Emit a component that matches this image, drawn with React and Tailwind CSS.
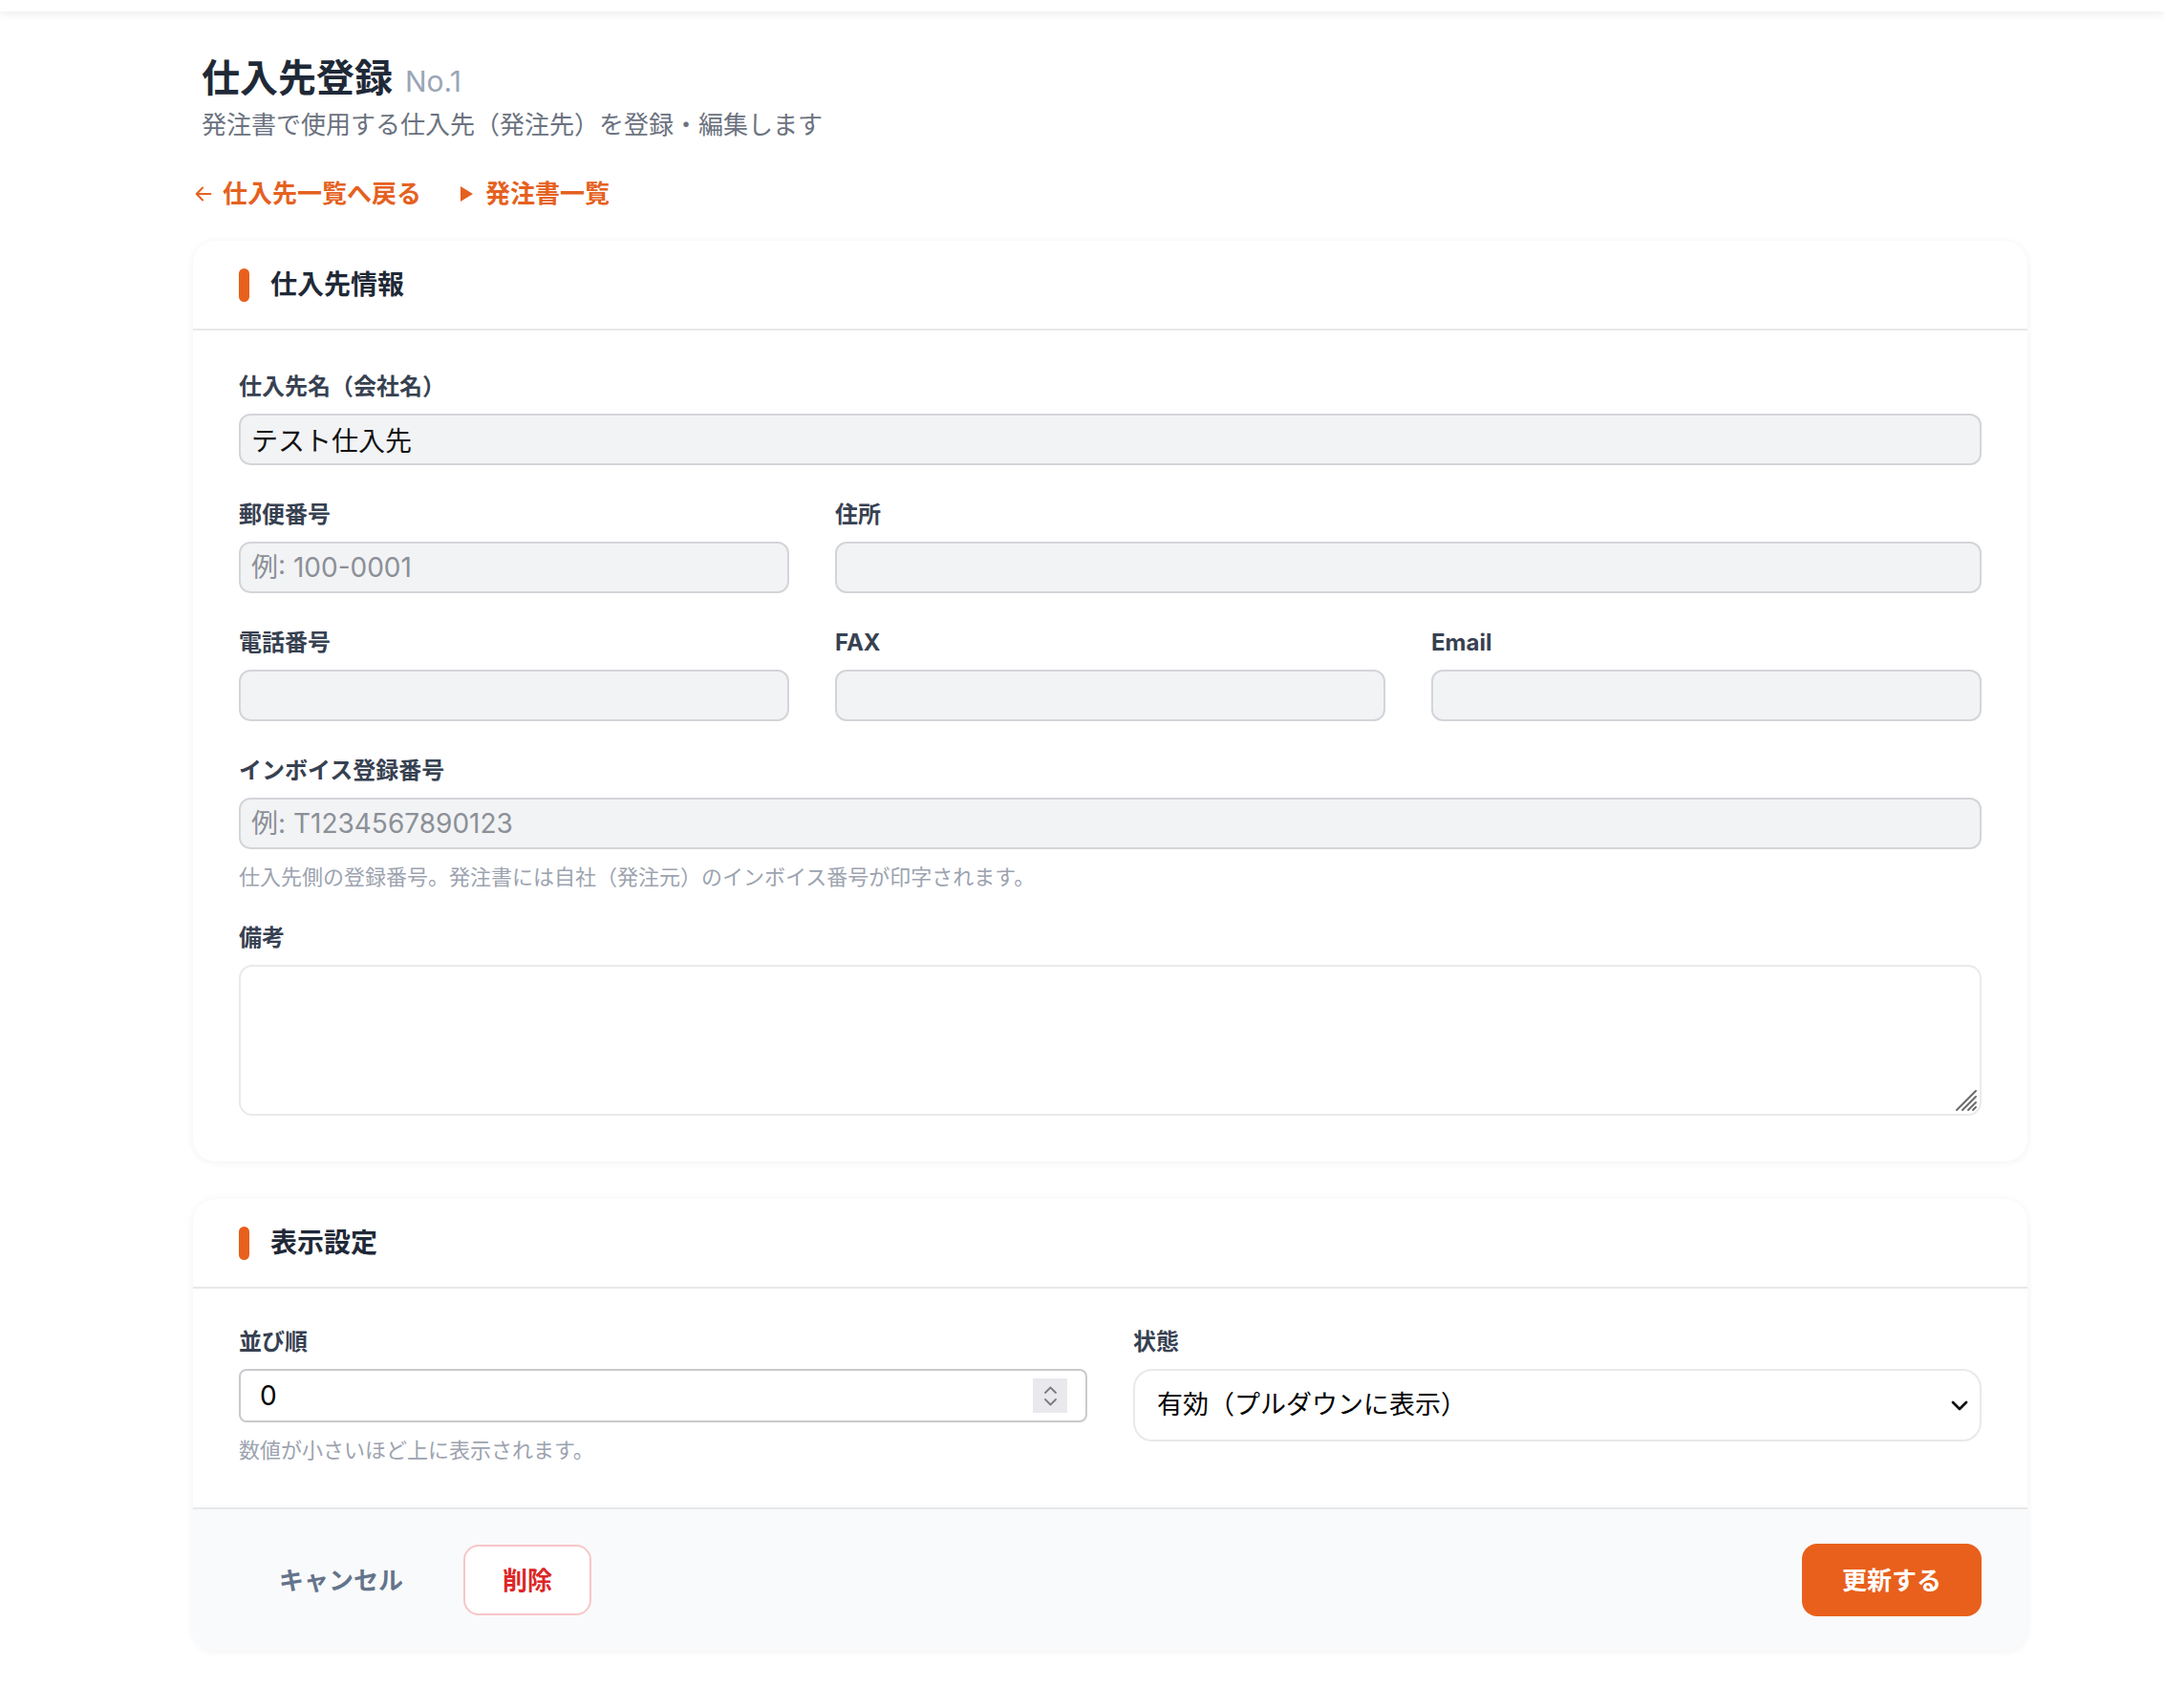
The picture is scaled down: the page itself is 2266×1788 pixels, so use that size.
import React from "react";

const ORANGE = "bg-[#e8601c]";

function SectionHeader({ title }) {
    return (
        <div className="px-[48px] py-[28px] border-b-2 border-[#e7e8ea]">
            <div className="flex items-center gap-[22px]">
                <span className={`w-[11px] h-[35px] rounded-full ${ORANGE}`} />
                <h2 className="text-[28px] leading-[36px] font-bold text-[#1f2937]">{title}</h2>
            </div>
        </div>
    );
}

function Label({ children }) {
    return (
        <label className="block mb-[12px] text-[24px] leading-[32px] font-bold text-[#374151]">
            {children}
        </label>
    );
}

function TextField({ label, value, placeholder, className = "" }) {
    return (
        <div className={className}>
            <Label>{label}</Label>
            <input
                type="text"
                defaultValue={value}
                placeholder={placeholder}
                className="block w-full h-[54px] rounded-[12px] border-2 border-[#d3d5d9] bg-[#f2f3f5] px-[11px] text-[28px] text-[#111111] placeholder:text-[#8b9097] outline-none"
            />
        </div>
    );
}

function Help({ children, className = "" }) {
    return <p className={`text-[22px] leading-[30px] text-[#9ca3af] ${className}`}>{children}</p>;
}

export default function App() {
    return (
        <div className="min-h-screen bg-white font-['Inter','Noto_Sans_CJK_JP',sans-serif] text-[#1f2937]">
            {/* top bar edge */}
            <div className="h-[12px] bg-white shadow-[0_3px_10px_rgba(0,0,0,0.07)]" />

            <div className="ml-[202px] w-[1920px] pt-[42px] pb-[56px]">
                {/* Page heading */}
                <div className="pl-[9px]">
                    <h1 className="flex items-baseline gap-[13px] text-[40px] leading-[56px] font-bold text-[#1f2937]">
                        仕入先登録
                        <span className="text-[30px] font-normal text-[#9aa5b5]">No.1</span>
                    </h1>
                    <p className="mt-0 text-[26px] leading-[36px] text-[#6b7280]">
                        発注書で使用する仕入先（発注先）を登録・編集します
                    </p>
                </div>

                {/* Links */}
                <div className="mt-[36px] flex items-center gap-[40px] text-[26px] leading-[36px] font-bold text-[#e5611f]">
                    <a className="flex items-center gap-[9px]">
                        <svg className="w-[22px] h-[22px]" viewBox="0 0 24 24" fill="none" stroke="currentColor" strokeWidth={2.2} strokeLinecap="round" strokeLinejoin="round">
                            <path d="M20 12H4M11 5l-7 7 7 7" />
                        </svg>
                        仕入先一覧へ戻る
                    </a>
                    <a className="flex items-center gap-[12px]">
                        <svg className="w-[15px] h-[18px]" viewBox="0 0 15 18" fill="currentColor">
                            <path d="M1 1l13 8-13 8z" />
                        </svg>
                        発注書一覧
                    </a>
                </div>

                {/* Card 1 */}
                <div className="mt-[31px] rounded-[24px] bg-white shadow-[0_1px_8px_rgba(0,0,0,0.06)]">
                    <SectionHeader title="仕入先情報" />
                    <div className="px-[48px] pt-[43px] pb-[48px] flex flex-col gap-[36px]">
                        <TextField label="仕入先名（会社名）" value="テスト仕入先" />
                        <div className="grid grid-cols-3 gap-x-[48px]">
                            <TextField label="郵便番号" placeholder="例: 100-0001" />
                            <TextField label="住所" className="col-span-2" />
                        </div>
                        <div className="grid grid-cols-3 gap-x-[48px]">
                            <TextField label="電話番号" />
                            <TextField label="FAX" />
                            <TextField label="Email" />
                        </div>
                        <div>
                            <TextField label="インボイス登録番号" placeholder="例: T1234567890123" />
                            <Help className="mt-[14px]">
                                仕入先側の登録番号。発注書には自社（発注元）のインボイス番号が印字されます。
                            </Help>
                        </div>
                        <div className="-mt-[3px]">
                            <Label>備考</Label>
                            <div className="relative">
                                <textarea className="block w-full h-[158px] resize-none rounded-[14px] border-2 border-[#e9eaec] bg-white px-[12px] py-[10px] text-[28px] outline-none" />
                                <svg className="absolute right-[4px] bottom-[4px] w-[24px] h-[24px]" viewBox="0 0 24 24" stroke="#6b6b6b" strokeWidth={2} strokeLinecap="round">
                                    <path d="M2 22L22 2M8 22L22 8M14 22l8-8M19 22l3-3" />
                                </svg>
                            </div>
                        </div>
                    </div>
                </div>

                {/* Card 2 */}
                <div className="mt-[39px] rounded-[24px] bg-white shadow-[0_1px_8px_rgba(0,0,0,0.06)] overflow-hidden">
                    <SectionHeader title="表示設定" />
                    <div className="px-[48px] pt-[40px] pb-[45px] grid grid-cols-2 gap-x-[48px]">
                        <div>
                            <Label>並び順</Label>
                            <div className="h-[56px] rounded-[8px] border-2 border-[#c9cacd] bg-white flex items-center justify-between pl-[20px] pr-[19px]">
                                <span className="text-[28px] text-black">0</span>
                                <span className="w-[36px] h-[36px] bg-[#e9e9ed] flex flex-col items-center justify-center gap-[5px]">
                                    <svg className="w-[13px] h-[8px]" viewBox="0 0 13 8" fill="none" stroke="#7c7c80" strokeWidth={1.8} strokeLinecap="round" strokeLinejoin="round">
                                        <path d="M1 7l5.5-5.5L12 7" />
                                    </svg>
                                    <svg className="w-[13px] h-[8px]" viewBox="0 0 13 8" fill="none" stroke="#7c7c80" strokeWidth={1.8} strokeLinecap="round" strokeLinejoin="round">
                                        <path d="M1 1l5.5 5.5L12 1" />
                                    </svg>
                                </span>
                            </div>
                            <Help className="mt-[14px]">数値が小さいほど上に表示されます。</Help>
                        </div>
                        <div>
                            <Label>状態</Label>
                            <div className="h-[76px] rounded-[20px] border-2 border-[#e8e9eb] bg-white flex items-center justify-between pl-[23px] pr-[12px]">
                                <span className="text-[27px] text-black">有効（プルダウンに表示）</span>
                                <svg className="w-[18px] h-[11px]" viewBox="0 0 18 11" fill="none" stroke="#111111" strokeWidth={2.8} strokeLinecap="round" strokeLinejoin="round">
                                    <path d="M2 2l7 7 7-7" />
                                </svg>
                            </div>
                        </div>
                    </div>

                    {/* Footer */}
                    <div className="border-t-2 border-[#e7e8ea] bg-[#f9fafb] px-[48px] py-[36px] flex items-center justify-between">
                        <div className="flex items-center gap-[21px]">
                            <button className="h-[74px] px-[42px] text-[26px] font-bold text-[#64748b]">キャンセル</button>
                            <button className="h-[74px] px-[39px] rounded-[16px] border-2 border-[#f8c6c6] bg-white text-[26px] font-bold text-[#dc2626]">
                                削除
                            </button>
                        </div>
                        <button className={`h-[76px] px-[42px] rounded-[16px] ${ORANGE} text-[26px] font-bold text-white`}>
                            更新する
                        </button>
                    </div>
                </div>
            </div>
        </div>
    );
}
